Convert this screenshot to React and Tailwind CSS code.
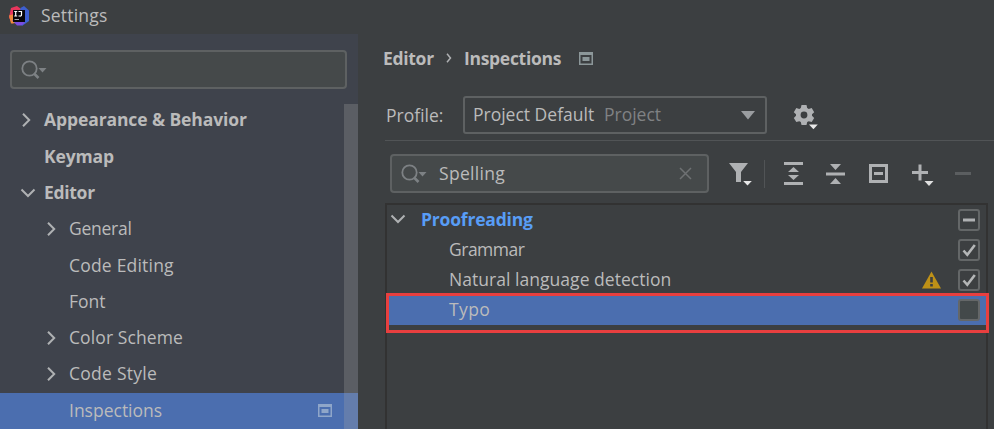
const sans = 'font-["Open_Sans","Noto_Sans",sans-serif]';

function Logo() {
  return (
    <svg width="20" height="20" viewBox="0 0 20 20" className="shrink-0">
      <path d="M2 2 8 0l4 3-3 13-6 1.500-3-6z" fill="#e8365d" />
      <path d="M0 9.500 5 8l2 9-5 .5z" fill="#ee8a3c" />
      <path d="M11.500 2 15 0l5 4.500V15l-7 5-4-4z" fill="#3d5fd0" />
      <path d="M3 14h9l4 3-4 2.500H8z" fill="#7b4de0" />
      <rect x="4" y="4" width="12" height="12" fill="#08070b" />
      <path d="M5.200 5.500h3M6.700 5.500v4.500M5.200 10h3M9.500 5.500h3v3.300q0 1.500-1.800 1.200H9.500" fill="none" stroke="#fff" strokeWidth="1.200" />
      <path d="M5.500 13.500h4.500" stroke="#aaa" strokeWidth="1" />
    </svg>
  );
}

function SearchIcon() {
  return (
    <svg width="27" height="20" viewBox="0 0 27 20" className="shrink-0">
      <circle cx="9.500" cy="8.500" r="7.200" fill="none" stroke="#7d8184" strokeWidth="1.800" />
      <path d="m14 13.500 4.500 4.500" stroke="#7d8184" strokeWidth="2.600" />
      <path d="M18.500 8h8l-4 4.500z" fill="#7d8184" />
    </svg>
  );
}

function Chevron({ open, className = "" }) {
  return (
    <svg width="16" height="16" viewBox="0 0 16 16" className={"shrink-0 " + className}>
      <path d={open ? "M1.500 4.500 8 11l6.500-6.500" : "M5 1.800 11.200 8 5 14.200"} fill="none" stroke="#afb1b3" strokeWidth="2" />
    </svg>
  );
}

function ProjectIcon({ color }) {
  return (
    <svg width="14" height="13" viewBox="0 0 14 13" className="shrink-0">
      <path fillRule="evenodd" d="M0 0h14v13H0zM1.500 3v8.500h11V3z" fill={color} />
      <rect x="3.500" y="5" width="7" height="4" fill={color} />
    </svg>
  );
}

const nav = [
  { label: "Appearance & Behavior", bold: true, arrow: "closed", track: "tracking-[-0.1px]" },
  { label: "Keymap", bold: true, track: "tracking-[-0.15px]" },
  { label: "Editor", bold: true, arrow: "open", track: "tracking-[-0.3px]" },
  { label: "General", arrow: "closed", track: "tracking-[-0.25px]" },
  { label: "Code Editing", track: "tracking-[0.2px]" },
  { label: "Font" },
  { label: "Color Scheme", arrow: "closed", track: "tracking-[0.1px]" },
  { label: "Code Style", arrow: "closed", track: "tracking-[0.25px]" },
  { label: "Inspections", selected: true },
];

function NavRow({ item }) {
  return (
    <div
      className={
        "flex h-[36.3px] shrink-0 items-center pb-[2px] " +
        (item.bold ? "pl-[18px]" : "pl-[43px]") +
        (item.selected ? " bg-[#4b6eaf]" : "")
      }
    >
      <span className="flex w-[26px] shrink-0">
        {item.arrow && <Chevron open={item.arrow === "open"} className={item.arrow === "open" ? "ml-[2px]" : ""} />}
      </span>
      <span className={"text-[#bbbbbb] " + (item.bold ? "font-bold " : "") + (item.track || "")}>{item.label}</span>
      {item.selected && (
        <span className="mr-[26px] ml-auto">
          <ProjectIcon color="#8fa6c9" />
        </span>
      )}
    </div>
  );
}

function Sidebar() {
  return (
    <aside className="relative flex w-[358px] shrink-0 flex-col overflow-hidden bg-[#3f434c]">
      <div className="mx-[10px] mt-[16px] flex h-[39px] w-[337px] shrink-0 items-center rounded border-2 border-[#5e6162] bg-[#45494a] pl-[8px]">
        <SearchIcon />
      </div>
      <nav className="mt-[14px] flex flex-col">
        {nav.map((item) => (
          <NavRow key={item.label} item={item} />
        ))}
      </nav>
      <div className="absolute top-[70px] right-0 bottom-0 w-[14px] bg-[#a6a6a6]/28" />
    </aside>
  );
}

function CheckBox({ state }) {
  return (
    <span
      className={
        "flex size-[22px] shrink-0 items-center justify-center rounded-[3px] border-2 border-[#646768] " +
        (state === "off" ? "bg-[#43494a]" : "bg-[#3c3f41]")
      }
    >
      <svg width="18" height="18" viewBox="0 0 18 18">
        {state === "mixed" && <path d="M3 9h12" stroke="#afb1b3" strokeWidth="3" />}
        {state === "on" && <path d="m3.500 9.500 3.800 4.300L14.800 4" fill="none" stroke="#b4b6b7" strokeWidth="2.600" />}
      </svg>
    </span>
  );
}

function Warning() {
  return (
    <svg width="19" height="18" viewBox="0 0 19 18" className="mr-[17px] shrink-0">
      <path d="M9.500 0.500 19 17.500H0z" fill="#be9117" />
      <path d="M8.200 6h2.600v5.500H8.200zM8.200 13h2.600v2.400H8.200z" fill="#3c3f41" />
    </svg>
  );
}

function Toolbar() {
  return (
    <div className="flex h-[38px] items-center">
      <svg width="24" height="24" viewBox="0 0 24 24" className="ml-[19px]">
        <path d="M1 1h19l-7 9v10H8V10z" fill="#afb1b3" />
        <path d="M14.500 18.500h9.500l-4.700 5.500z" fill="#3c3f41" />
        <path d="M15.200 19h8.600l-4.300 4.500z" fill="#e8e8e8" />
      </svg>
      <div className="ml-[12px] h-[28px] w-px bg-[#515456]" />
      <svg width="19" height="23" viewBox="0 0 19 23" className="ml-[19px]">
        <path d="M0 0h19v3H0zM0 20h19v3H0zM9.500 5l5.500 5H4zM4 13h11l-5.500 5z" fill="#afb1b3" />
      </svg>
      <svg width="19" height="20" viewBox="0 0 19 20" className="ml-[23px]">
        <path d="M0 8.500h19v3H0zM4 0h11L9.500 6zM9.500 14l5.500 6H4z" fill="#afb1b3" />
      </svg>
      <svg width="19" height="19" viewBox="0 0 19 19" className="ml-[24px]">
        <path d="M1.500 1.500h16v16h-16z" fill="none" stroke="#afb1b3" strokeWidth="3" />
        <path d="M5 9.500h9" stroke="#afb1b3" strokeWidth="3" />
      </svg>
      <svg width="22" height="22" viewBox="0 0 22 22" className="mt-[3px] ml-[24px]">
        <path d="M0 8.500h16M8 .5v16" stroke="#afb1b3" strokeWidth="3" />
        <path d="M12.500 17h9l-4.500 5z" fill="#e0e0e0" />
      </svg>
      <div className="ml-[21px] h-[3px] w-[16px] bg-[#5b5e60]" />
    </div>
  );
}

const inspections = [
  { label: "Grammar", state: "on", track: "tracking-[-0.5px]" },
  { label: "Natural language detection", state: "on", warn: true, track: "tracking-[0.04px]" },
  { label: "Typo", state: "off", selected: true, track: "tracking-[0.4px]" },
];

function Inspections() {
  return (
    <section className="relative ml-[27px] h-[226px] w-[603px] border-2 border-b-0 border-[#323232]">
      <div className="flex h-[30px] items-center pr-[6px] pl-[3px]">
        <Chevron open className="mb-[2px]" />
        <span className="ml-[15px] font-bold tracking-[-0.2px] text-[#589df6]">Proofreading</span>
        <span className="ml-auto">
          <CheckBox state="mixed" />
        </span>
      </div>
      {inspections.map((row) => (
        <div key={row.label} className={"flex h-[30px] items-center pr-[6px] pl-[62px] " + (row.selected ? "bg-[#4b6eaf]" : "")}>
          <span className={"mr-auto text-[#bbbbbb] " + row.track}>{row.label}</span>
          {row.warn && <Warning />}
          <CheckBox state={row.state} />
        </div>
      ))}
      <div className="absolute top-[88px] left-[-1px] h-[40px] w-[603px] border-[3px] border-[#e83f3f]" />
    </section>
  );
}

export default function App() {
  return (
    <div className={"flex h-[429px] w-[994px] flex-col overflow-hidden bg-[#3c3f41] text-[17.5px] leading-none whitespace-nowrap text-[#bbbbbb] " + sans}>
      <header className="flex h-[34px] shrink-0 items-center pb-[2px] pl-[9px]">
        <Logo />
        <span className="ml-[12px] tracking-[0.2px]">Settings</span>
      </header>
      <div className="flex min-h-0 flex-1">
        <Sidebar />
        <main className="flex min-w-0 flex-1 flex-col">
          <div className="mt-[13px] flex h-[24px] items-center pl-[25px] font-bold">
            <span className="w-[51px] tracking-[-0.3px]">Editor</span>
            <svg width="6" height="10" viewBox="0 0 6 10" className="mx-[12px] mb-[2px]">
              <path d="M1 .8 4.500 5 1 9.200" fill="none" stroke="#afb1b3" strokeWidth="1.500" />
            </svg>
            <span className="w-[99px] tracking-[-0.3px]">Inspections</span>
            <span className="mb-[2px] ml-[16px]">
              <ProjectIcon color="#8c9799" />
            </span>
          </div>
          <div className="mt-[25px] ml-[28px] flex h-[38px] items-center">
            <span className="w-[77px] pt-[2px]">Profile:</span>
            <div className="flex h-[38px] w-[304px] items-center rounded-[3px] border-2 border-[#5e6162] pr-[10px] pl-[8px]">
              <span className="w-[131px]">Project Default</span>
              <span className="text-[#808284]">Project</span>
              <svg width="14" height="9" viewBox="0 0 14 9" className="ml-auto">
                <path d="M0 0h14L7 8.500z" fill="#9a9da0" />
              </svg>
            </div>
            <svg width="25" height="26" viewBox="0 0 25 26" className="mt-[3px] ml-[27px] overflow-visible">
              <path
                fillRule="evenodd"
                fill="#afb1b3"
                d="M7.500 1h5l.7 3 1.500.9 3-.9 2.500 4.200-2.200 2.100v1.500l2.200 2.100-2.500 4.200-3-.9-1.500.9-.7 3h-5l-.7-3-1.500-.9-3 .9L-.2 13.900 2 11.800v-1.500L-.2 8.200 2.300 4l3 .9L6.800 4zM10 7.600a3.400 3.400 0 1 0 0 6.800 3.400 3.400 0 0 0 0-6.800z"
              />
              <path d="M14.500 20h10l-5 5.500z" fill="#3c3f41" />
              <path d="M15 20.500h8.800l-4.400 4.700z" fill="#e8e8e8" />
            </svg>
          </div>
          <div className="mt-[6px] ml-[27px] h-px bg-[#515456]" />
          <div className="mt-[13px] ml-[32px] flex h-[39px] items-center">
            <div className="flex h-[39px] w-[319px] items-center rounded border-2 border-[#5e6162] bg-[#45494a] pr-[15px] pl-[8px]">
              <SearchIcon />
              <span className="ml-[12px] tracking-[0.3px]">Spelling</span>
              <svg width="13" height="13" viewBox="0 0 13 13" className="ml-auto">
                <path d="m1 1 11 11M12 1 1 12" stroke="#6e7173" strokeWidth="1.500" />
              </svg>
            </div>
            <Toolbar />
          </div>
          <div className="mt-[10px]">
            <Inspections />
          </div>
        </main>
      </div>
    </div>
  );
}
